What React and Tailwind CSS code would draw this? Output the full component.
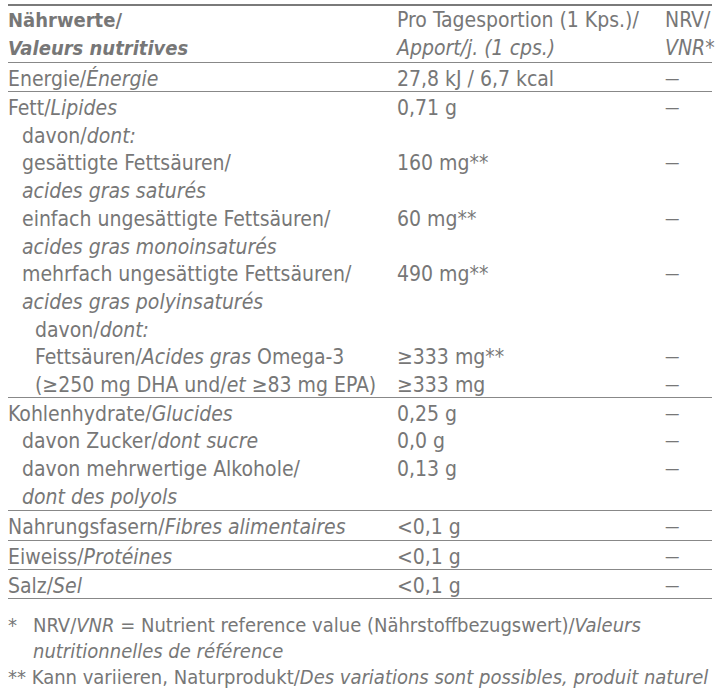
const rows = [
  {
    lines: [
      { a: <>Fett/<i>Lipides</i></>, b: "0,71 g", c: true },
      { a: <>davon/<i>dont:</i></>, indent: 1 },
      { a: "gesättigte Fettsäuren/", b: "160 mg**", c: true, indent: 1 },
      { a: <i>acides gras saturés</i>, indent: 1 },
      { a: "einfach ungesättigte Fettsäuren/", b: "60 mg**", c: true, indent: 1 },
      { a: <i>acides gras monoinsaturés</i>, indent: 1 },
      { a: "mehrfach ungesättigte Fettsäuren/", b: "490 mg**", c: true, indent: 1 },
      { a: <i>acides gras polyinsaturés</i>, indent: 1 },
      { a: <>davon/<i>dont:</i></>, indent: 2 },
      { a: <>Fettsäuren/<i>Acides gras</i> Omega-3</>, b: "≥333 mg**", c: true, indent: 2 },
      { a: <>(≥250 mg DHA und/<i>et</i> ≥83 mg EPA)</>, b: "≥333 mg", c: true, indent: 2 },
    ],
  },
  {
    lines: [
      { a: <>Kohlenhydrate/<i>Glucides</i></>, b: "0,25 g", c: true },
      { a: <>davon Zucker/<i>dont sucre</i></>, b: "0,0 g", c: true, indent: 1 },
      { a: "davon mehrwertige Alkohole/", b: "0,13 g", c: true, indent: 1 },
      { a: <i>dont des polyols</i>, indent: 1 },
    ],
    pb: "pb-[2px]",
  },
  { lines: [{ a: <>Nahrungsfasern/<i>Fibres alimentaires</i></>, b: "<0,1 g", c: true }], pb: "pb-[1px]" },
  { lines: [{ a: <>Eiweiss/<i>Protéines</i></>, b: "<0,1 g", c: true }] },
  { lines: [{ a: <>Salz/<i>Sel</i></>, b: "<0,1 g", c: true }], pb: "pb-[1px]" },
];

const indents = ["pl-0", "pl-[14px]", "pl-[27px]"];

function Line({ a, b, c, indent = 0 }) {
  return (
    <div className="grid grid-cols-[389px_268px_1fr] h-[27.7px] pt-[5px] leading-[22.7px]">
      <div className={indents[indent]}>{a}</div>
      <div>{b}</div>
      <div className="text-[16px]">{c ? "—" : ""}</div>
    </div>
  );
}

export default function App() {
  return (
    <div
      className="w-[720px] h-[692px] bg-white px-[8px] pt-[4px] text-[21px] text-[#777] overflow-hidden"
      style={{ fontFamily: "'DejaVu Sans Condensed', 'DejaVu Sans', sans-serif" }}
    >
      <div className="border-t-2 border-[#7a7a7a]">
        <div className="grid grid-cols-[389px_268px_1fr] leading-[27.7px] border-b-[1.5px] border-[#888] pt-[1px]">
          <div className="font-bold text-[20px]">
            Nährwerte/
            <br />
            <i>Valeurs nutritives</i>
          </div>
          <div>
            Pro Tagesportion (1 Kps.)/
            <br />
            <i>Apport/j. (1 cps.)</i>
          </div>
          <div>
            NRV/
            <br />
            <i>VNR*</i>
          </div>
        </div>
        <div className="border-b-[1.5px] border-[#888]">
          <Line a={<>Energie/<i>Énergie</i></>} b="27,8 kJ / 6,7 kcal" c />
        </div>
        {rows.map((r, i) => (
          <div key={i} className={`border-b-[1.5px] border-[#888] ${r.pb || ""}`}>
            {r.lines.map((l, j) => (
              <Line key={j} {...l} />
            ))}
          </div>
        ))}
      </div>
      <div className="mt-[13px] leading-[26px] text-[20px]">
        <div className="flex">
          <span className="w-[25px] shrink-0">*</span>
          <p>
            NRV/<i>VNR</i> = Nutrient reference value (Nährstoffbezugswert)/<i>Valeurs nutritionnelles de référence</i>
          </p>
        </div>
        <p>
          ** Kann variieren, Naturprodukt/<i>Des variations sont possibles, produit naturel</i>
        </p>
      </div>
    </div>
  );
}
